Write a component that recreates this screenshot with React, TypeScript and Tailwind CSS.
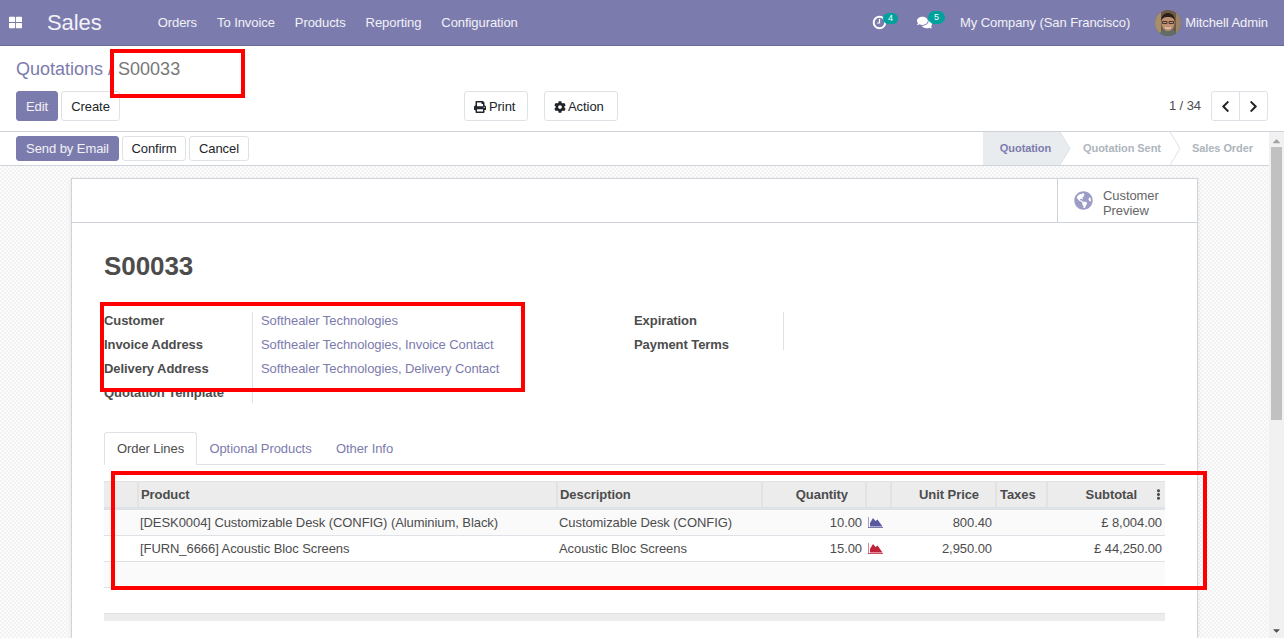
import React from 'react'
import { FaThLarge, FaComments, FaPrint, FaCog, FaChevronLeft, FaChevronRight, FaGlobeAmericas, FaEllipsisV, FaCaretUp, FaCaretDown } from 'react-icons/fa'

const navItems = ['Orders', 'To Invoice', 'Products', 'Reporting', 'Configuration']
const btn = 'h-full rounded-[3px] border border-[#dee2e6] bg-white pt-[1px] text-[13px] text-[#212529] flex items-center justify-center'

function Moon() {
  return (
    <svg width="15" height="15" viewBox="0 0 15 15" className="text-white">
      <circle cx="7.5" cy="7.5" r="5.8" fill="none" stroke="currentColor" strokeWidth="2" />
      <path d="M7.5 4v4H5" fill="none" stroke="currentColor" strokeWidth="1.2" />
    </svg>
  )
}

function Avatar() {
  return (
    <svg width="26" height="26" viewBox="0 0 26 26" className="rounded-full">
      <rect width="26" height="26" fill="#6f5a44" />
      <rect x="0" y="0" width="6" height="26" fill="#a88f6c" />
      <rect x="21" y="0" width="5" height="26" fill="#9a8465" />
      <path d="M4 26c1-6 5-7 9-7s8 1 9 7z" fill="#5f6f66" />
      <ellipse cx="13" cy="13" rx="6.5" ry="8" fill="#c08f72" />
      <path d="M6 11c0-6 4-8 7-8s7 2 7 8c-1-3-3-4-7-4s-6 1-7 4z" fill="#2b201a" />
      <path d="M7.500 11.500h4.500v2h-4.500zM14 11.500h4.500v2H14z" fill="none" stroke="#2b2320" strokeWidth=".8" />
      <path d="M10 17.500c2 1 4 1 6 0" fill="none" stroke="#f1e3d8" strokeWidth="1" />
    </svg>
  )
}

function Badge({ n, className }: { n: number; className: string }) {
  return (
    <span className={`absolute flex items-center justify-center rounded-full bg-[#00a09d] text-[9px] text-white ${className}`}>
      {n}
    </span>
  )
}

function Navbar() {
  return (
    <div className="flex h-[46px] shrink-0 items-center border-b border-[#6a699b] bg-[#7c7bad] text-[13px] text-white/90">
      <FaThLarge size={13} className="ml-[9px] text-white" />
      <span className="ml-[25px] text-[22px] leading-none text-white/90">Sales</span>
      <div className="ml-[56px] flex gap-[20px]">
        {navItems.map(n => <span key={n}>{n}</span>)}
      </div>
      <div className="ml-auto flex items-center">
        <span className="relative mr-[30px] block h-[15px] w-[15px]">
          <Moon />
          <Badge n={4} className="left-[11px] top-[-2px] h-[11px] w-[15px]" />
        </span>
        <span className="relative mr-[28px] block h-[15px] w-[15px]">
          <FaComments size={15} className="text-white" />
          <Badge n={5} className="left-[11px] top-[-4px] h-[13px] w-[17px]" />
        </span>
        <span>My Company (San Francisco)</span>
        <span className="ml-[25px]"><Avatar /></span>
        <span className="ml-[4px] mr-[16px]">Mitchell Admin</span>
      </div>
    </div>
  )
}

function ControlPanel() {
  return (
    <div className="h-[86px] shrink-0 border-b border-[#ced4da] bg-white px-[16px] pt-[11px]">
      <div className="h-[24px] text-[18px] leading-[24px] tracking-normal text-[#777]">
        <span className="text-[#7c7bad]">Quotations</span>
        <span className="text-[#7c7bad]"> / </span>
        S00033
      </div>
      <div className="mt-[10px] flex h-[30px]">
        <button className={`${btn} w-[42px] !border-[#7c7bad] !bg-[#7c7bad] !text-white/90`}>Edit</button>
        <button className={`${btn} ml-[3px] w-[59px]`}>Create</button>
        <button className={`${btn} ml-[344px] w-[64px] !justify-start gap-[3px] pl-[9px]`}><FaPrint size={12} />Print</button>
        <button className={`${btn} ml-[16px] w-[74px] !justify-start gap-[2px] pl-[9px]`}><FaCog size={12} />Action</button>
        <span className="ml-auto flex items-center text-[13px] text-[#4c4c4c]">1 / 34</span>
        <div className="ml-[10px] flex h-full w-[57px] rounded-[3px] border border-[#dee2e6]">
          <span className="flex flex-1 items-center justify-center border-r border-[#dee2e6]"><FaChevronLeft size={13} className="text-[#212529]" /></span>
          <span className="flex flex-1 items-center justify-center"><FaChevronRight size={13} className="text-[#212529]" /></span>
        </div>
      </div>
    </div>
  )
}

function Arrow({ fill }: { fill: string }) {
  return (
    <svg width="11" height="33" viewBox="0 0 11 33" className="absolute left-full top-0">
      <path d="M0 0l10 16.500L0 33" fill={fill} stroke="#dee2e6" />
    </svg>
  )
}

function StatusBar() {
  return (
    <div className="flex h-[34px] shrink-0 items-center border-b border-[#ced4da] bg-white pl-[16px]">
      <button className={`${btn} !h-[25px] !pt-0 w-[103px] !border-[#7c7bad] !bg-[#7c7bad] !text-white/90`}>Send by Email</button>
      <button className={`${btn} !h-[25px] !pt-0 ml-[3px] w-[64px]`}>Confirm</button>
      <button className={`${btn} !h-[25px] !pt-0 ml-[3px] w-[60px]`}>Cancel</button>
      <div className="ml-auto flex h-full text-[11px] font-bold">
        <div className="relative flex w-[77px] items-center justify-center bg-[#e9ecef] pl-[8px] text-[#7c7bad]">Quotation<Arrow fill="#e9ecef" /></div>
        <div className="relative flex w-[110px] items-center justify-center pl-[14px] text-[#adb5bd]">Quotation Sent<Arrow fill="#fff" /></div>
        <div className="flex w-[99px] items-center justify-center pl-[6px] text-[#adb5bd]">Sales Order</div>
      </div>
    </div>
  )
}

function AreaChart({ className }: { className: string }) {
  return (
    <svg width="15" height="11" viewBox="0 0 15 11" className={className}>
      <rect x="0" y="0" width="1" height="11" fill="currentColor" opacity=".55" />
      <rect x="0" y="10" width="15" height="1" fill="currentColor" opacity=".8" />
      <path d="M2 9.500V6l3-5 2.500 3 2-1.500L12 6l2.500 3.500z" fill="currentColor" />
    </svg>
  )
}

const tableCols = 'grid grid-cols-[33px_419px_205px_104px_25px_105px_51px_119px]'
const headCell = 'flex items-center border-l-2 border-[#e2e2e2] pl-[2px] font-bold text-[#4c4c4c]'
const rowCell = 'flex items-center px-[3px]'

const rows = [
  { product: '[DESK0004] Customizable Desk (CONFIG) (Aluminium, Black)', desc: 'Customizable Desk (CONFIG)', qty: '10.00', chart: 'text-[#5b5a9e]', price: '800.40', total: '£ 8,004.00', bg: 'bg-[#fafafa]' },
  { product: '[FURN_6666] Acoustic Bloc Screens', desc: 'Acoustic Bloc Screens', qty: '15.00', chart: 'text-[#c0223b]', price: '2,950.00', total: '£ 44,250.00', bg: 'bg-white' },
]

function OrderTable() {
  return (
    <div className="mt-[16px] text-[13px] text-[#4c4c4c]">
      <div className={`${tableCols} h-[29px] border-y border-b-[3px] border-t-[#e2e2e2] border-b-[#dee2e6] bg-[#ececec]`}>
        <div />
        <div className={headCell}>Product</div>
        <div className={headCell}>Description</div>
        <div className={`${headCell} justify-end pr-[17px]`}>Quantity</div>
        <div className={headCell} />
        <div className={`${headCell} justify-end pr-[16px]`}>Unit Price</div>
        <div className={headCell}><span className="ml-[1px]">Taxes</span></div>
        <div className={`${headCell} justify-end pr-[1px]`}>
          <span className="mr-[16px]">Subtotal</span>
          <FaEllipsisV size={11} />
        </div>
      </div>
      {rows.map(r => (
        <div key={r.product} className={`${tableCols} h-[26px] border-b border-[#dee2e6] ${r.bg}`}>
          <div />
          <div className={rowCell}>{r.product}</div>
          <div className={rowCell}>{r.desc}</div>
          <div className={`${rowCell} justify-end`}>{r.qty}</div>
          <div className={`${rowCell} ${r.chart}`}><AreaChart className="-mt-[1px]" /></div>
          <div className={`${rowCell} justify-end`}>{r.price}</div>
          <div />
          <div className={`${rowCell} justify-end`}>{r.total}</div>
        </div>
      ))}
      <div className="h-[26px] border-b border-[#dee2e6] bg-[#fafafa]" />
      <div className="h-[26px] border-b border-[#dee2e6] bg-white" />
      <div className="h-[7px] bg-[#ececec]" />
    </div>
  )
}

function Sheet() {
  const labelCls = 'h-[24px] font-bold leading-[24px] text-[#4c4c4c]'
  return (
    <div className="ml-[71px] mt-[12px] h-[500px] w-[1127px] shrink-0 border border-[#ced4da] bg-white shadow-[0_1px_4px_rgba(0,0,0,0.08)]">
      <div className="flex h-[44px] justify-end border-b border-[#ced4da]">
        <div className="flex w-[140px] items-center border-l border-[#ced4da] pl-[16px]">
          <FaGlobeAmericas size={19} className="text-[#9d9cc6]" />
          <span className="ml-[10px] pt-[5px] text-[13px] leading-[15px] text-[#666]">Customer<br />Preview</span>
        </div>
      </div>
      <div className="px-[32px]">
        <h1 className="mt-[26px] text-[26px] font-bold leading-[34px] text-[#4c4c4c]">S00033</h1>
        <div className="mt-[29px] flex text-[13px]">
          <div className="h-[91px] w-[149px] border-r border-[#dee2e6]">
            <div className="-mt-[3px]">
              <div className={labelCls}>Customer</div>
              <div className={labelCls}>Invoice Address</div>
              <div className={labelCls}>Delivery Address</div>
              <div className={labelCls}>Quotation Template</div>
            </div>
          </div>
          <div className="-mt-[3px] w-[381px] pl-[8px] leading-[24px] text-[#7c7bad]">
            <div>Softhealer Technologies</div>
            <div>Softhealer Technologies, Invoice Contact</div>
            <div>Softhealer Technologies, Delivery Contact</div>
          </div>
          <div className="h-[38px] w-[150px] border-r border-[#dee2e6]">
            <div className="-mt-[3px]">
              <div className={labelCls}>Expiration</div>
              <div className={labelCls}>Payment Terms</div>
            </div>
          </div>
        </div>
        <div className="mt-[29px] flex h-[33px] border-b border-[#dee2e6] text-[13px] text-[#7c7bad]">
          <div className="flex h-[33px] w-[93px] items-center justify-center rounded-t-[3px] border border-b-white border-[#dee2e6] bg-white text-[#4c4c4c]">Order Lines</div>
          <div className="flex w-[127px] items-center justify-center pt-[2px]">Optional Products</div>
          <div className="flex w-[81px] items-center justify-center pt-[2px]">Other Info</div>
        </div>
        <OrderTable />
      </div>
    </div>
  )
}

function Scrollbar() {
  return (
    <div className="flex w-[15px] shrink-0 flex-col items-center bg-[#f1f1f1]">
      <FaCaretUp size={11} className="mt-[3px] h-[12px] text-[#a3a3a3]" />
      <div className="h-[273px] w-[11px] bg-[#c1c1c1]" />
      <FaCaretDown size={11} className="mt-auto mb-[2px] text-[#505050]" />
    </div>
  )
}

export default function App() {
  return (
    <div className="relative flex h-[638px] w-[1284px] flex-col overflow-hidden bg-white font-['Liberation_Sans',Arial,sans-serif] tracking-[-0.07px]">
      <Navbar />
      <ControlPanel />
      <div className="flex min-h-0 flex-1">
        <div className="flex min-w-0 flex-1 flex-col">
          <StatusBar />
          <div className="min-h-0 flex-1 overflow-hidden bg-[repeating-conic-gradient(#f2f2f2_0%_25%,#fcfcfc_0%_50%)] bg-[length:4px_4px]">
            <Sheet />
          </div>
        </div>
        <Scrollbar />
      </div>
      {/* red annotation boxes drawn on top of the screenshot */}
      <div className="absolute left-[110px] top-[49px] h-[49px] w-[135px] border-[4px] border-[#fe0000]" />
      <div className="absolute left-[100px] top-[302px] h-[90px] w-[425px] border-[4px] border-[#fe0000]" />
      <div className="absolute left-[111px] top-[471px] h-[119px] w-[1096px] border-[4px] border-[#fe0000]" />
    </div>
  )
}
